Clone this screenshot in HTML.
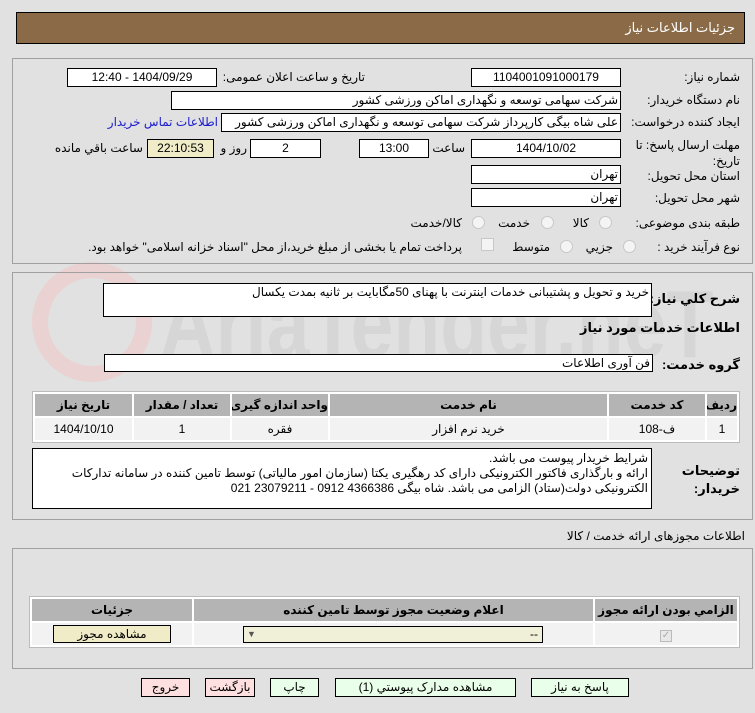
<!DOCTYPE html>
<html dir="rtl"><head><meta charset="utf-8"><style>
*{box-sizing:border-box;margin:0;padding:0}
body{width:755px;height:713px;background:#e1e1e1;font-family:"Liberation Sans","DejaVu Sans",sans-serif;font-size:12px;color:#000;position:relative;overflow:hidden}
.a{position:absolute;white-space:nowrap}
.box{position:absolute;background:#fff;border:1px solid #000;height:19px;line-height:17px;text-align:center;font-size:12px;overflow:hidden;white-space:nowrap}
.panel{position:absolute;border:1px solid #a0a0a0;left:12px;width:741px}
.lbl{position:absolute;right:15px;white-space:nowrap}
.b{font-weight:bold;font-size:13px}
.rad{position:absolute;width:13px;height:13px;border:1px solid #c8c8c8;border-radius:50%;background:#f4f4f4}
table{position:absolute;border-collapse:separate;border-spacing:2px;background:#fff;border:1px solid #bbb;table-layout:fixed}
th{background:#b4b4b4;font-weight:bold;height:22px;font-size:12px;white-space:nowrap;overflow:hidden}
td{background:#f2f2f2;height:22px;text-align:center;white-space:nowrap}
.btn{position:absolute;height:19px;border:1px solid #000;text-align:center;line-height:17px;font-size:12px}
.wm{position:absolute;left:0;top:0;width:755px;height:713px;overflow:hidden}
</style></head><body>
<div class="wm">
<div class="a" style="left:160px;top:270px;font-size:96px;font-weight:bold;color:#d6d6d6;direction:ltr;transform:scaleX(0.8);transform-origin:left top">AriaTender.neT</div>
<div class="a" style="left:32px;top:262px;width:120px;height:120px;border:16px solid #ead2d2;border-radius:50%"></div>
</div>
<div class="a" style="left:16px;top:12px;width:729px;height:32px;background:#8b6b47;border:1px solid #000"></div>
<div class="a" style="right:20px;top:20px;color:#fff;font-size:13px">جزئیات اطلاعات نیاز</div>

<div class="panel" style="top:58px;height:206px"></div>
<div class="lbl" style="top:70px">شماره نیاز:</div>
<div class="box" style="left:471px;top:68px;width:150px">1104001091000179</div>
<div class="a" style="right:390px;top:70px">تاریخ و ساعت اعلان عمومی:</div>
<div class="box" style="left:67px;top:68px;width:150px">1404/09/29 - 12:40</div>

<div class="lbl" style="top:93px">نام دستگاه خریدار:</div>
<div class="box" style="left:171px;top:91px;width:450px;text-align:right;padding-right:2px">شرکت سهامی توسعه و نگهداری اماکن ورزشی کشور</div>

<div class="lbl" style="top:115px">ایجاد کننده درخواست:</div>
<div class="box" style="left:221px;top:113px;width:400px;text-align:right;padding-right:2px">علی شاه بیگی کارپرداز شرکت سهامی توسعه و نگهداری اماکن ورزشی کشور</div>
<div class="a" style="right:537px;top:115px;color:#1a1ad0">اطلاعات تماس خریدار</div>

<div class="lbl" style="top:138px">مهلت ارسال پاسخ: تا</div>
<div class="lbl" style="top:154px">تاریخ:</div>
<div class="box" style="left:471px;top:139px;width:150px">1404/10/02</div>
<div class="a" style="right:290px;top:141px">ساعت</div>
<div class="box" style="left:359px;top:139px;width:70px">13:00</div>
<div class="box" style="left:250px;top:139px;width:71px">2</div>
<div class="a" style="right:508px;top:141px">روز و</div>
<div class="box" style="left:147px;top:139px;width:67px;background:#f0ecc8">22:10:53</div>
<div class="a" style="right:612px;top:141px">ساعت باقي مانده</div>

<div class="lbl" style="top:169px">استان محل تحویل:</div>
<div class="box" style="left:471px;top:165px;width:150px;text-align:right;padding-right:2px">تهران</div>
<div class="lbl" style="top:191px">شهر محل تحویل:</div>
<div class="box" style="left:471px;top:188px;width:150px;text-align:right;padding-right:2px">تهران</div>

<div class="lbl" style="top:216px">طبقه بندی موضوعی:</div>
<div class="rad" style="left:599px;top:216px"></div><div class="a" style="right:166px;top:216px">کالا</div>
<div class="rad" style="left:541px;top:216px"></div><div class="a" style="right:225px;top:216px">خدمت</div>
<div class="rad" style="left:472px;top:216px"></div><div class="a" style="right:293px;top:216px">کالا/خدمت</div>

<div class="lbl" style="top:240px">نوع فرآیند خرید :</div>
<div class="rad" style="left:623px;top:240px"></div><div class="a" style="right:142px;top:240px">جزیي</div>
<div class="rad" style="left:560px;top:240px"></div><div class="a" style="right:205px;top:240px">متوسط</div>
<div class="a" style="left:481px;top:238px;width:13px;height:13px;border:1px solid #c8c8c8;background:#f4f4f4"></div>
<div class="a" style="right:293px;top:240px">پرداخت تمام یا بخشی از مبلغ خرید،از محل "اسناد خزانه اسلامی" خواهد بود.</div>

<div class="panel" style="top:272px;height:248px"></div>
<div class="lbl b" style="top:291px">شرح کلي نیاز:</div>
<div class="box" style="left:103px;top:283px;width:549px;height:34px;text-align:right;padding-right:2px;background:#fff">خرید و تحویل و پشتیبانی خدمات اینترنت با پهنای 50مگابایت بر ثانیه بمدت یکسال</div>
<div class="lbl b" style="top:320px">اطلاعات خدمات مورد نیاز</div>
<div class="lbl b" style="top:357px">گروه خدمت:</div>
<div class="box" style="left:104px;top:354px;width:549px;height:18px;text-align:right;padding-right:2px">فن آوری اطلاعات</div>

<table style="left:32px;top:391px;width:708px">
<colgroup><col style="width:30px"><col style="width:96px"><col><col style="width:96px"><col style="width:96px"><col style="width:97px"></colgroup>
<tr><th>ردیف</th><th>کد خدمت</th><th>نام خدمت</th><th>واحد اندازه گیری</th><th>تعداد / مقدار</th><th>تاریخ نیاز</th></tr>
<tr><td>1</td><td>ف-108</td><td>خرید نرم افزار</td><td>فقره</td><td>1</td><td>1404/10/10</td></tr>
</table>

<div class="lbl b" style="top:463px">توضیحات</div>
<div class="lbl b" style="top:481px">خریدار:</div>
<div class="a" style="left:32px;top:448px;width:620px;height:61px;background:#fff;border:1px solid #000;white-space:normal;text-align:right;padding:2px 3px;line-height:15px">شرایط خریدار پیوست می باشد.<br>ارائه و بارگذاری فاکتور الکترونیکی دارای کد رهگیری یکتا (سازمان امور مالیاتی)  توسط تامین کننده در سامانه تدارکات الکترونیکی دولت(ستاد) الزامی می باشد. شاه بیگی 4366386  0912 - 23079211  021</div>

<div class="a" style="right:10px;top:529px">اطلاعات مجوزهای ارائه خدمت / کالا</div>
<div class="panel" style="top:548px;height:121px"></div>
<table style="left:29px;top:596px;width:711px">
<colgroup><col style="width:142px"><col><col style="width:160px"></colgroup>
<tr><th>الزامي بودن ارائه مجوز</th><th>اعلام وضعیت مجوز توسط تامین کننده</th><th>جزئیات</th></tr>
<tr><td><span style="display:inline-block;width:12px;height:12px;border:1px solid #bbb;background:#e8e8e8;color:#aaa;font-size:10px;line-height:10px">✓</span></td><td style="position:relative"><div style="position:absolute;left:49px;top:3px;width:300px;height:17px;border:1px solid #000;background:#f0efd8;text-align:right;padding-right:4px;line-height:15px">--<span style="position:absolute;left:3px;font-size:9px;color:#555">▼</span></div></td><td style="position:relative"><div style="position:absolute;left:21px;top:2px;width:118px;height:18px;border:1px solid #000;background:#f0ecc8;line-height:16px">مشاهده مجوز</div></td></tr>
</table>

<div class="btn" style="left:531px;top:678px;width:98px;background:#eaffea">پاسخ به نیاز</div>
<div class="btn" style="left:335px;top:678px;width:181px;background:#eaffea">مشاهده مدارک پیوستي (1)</div>
<div class="btn" style="left:270px;top:678px;width:49px;background:#eaffea">چاپ</div>
<div class="btn" style="left:205px;top:678px;width:50px;background:#ffe0e0">بازگشت</div>
<div class="btn" style="left:141px;top:678px;width:49px;background:#ffe0e0">خروج</div>
</body></html>
